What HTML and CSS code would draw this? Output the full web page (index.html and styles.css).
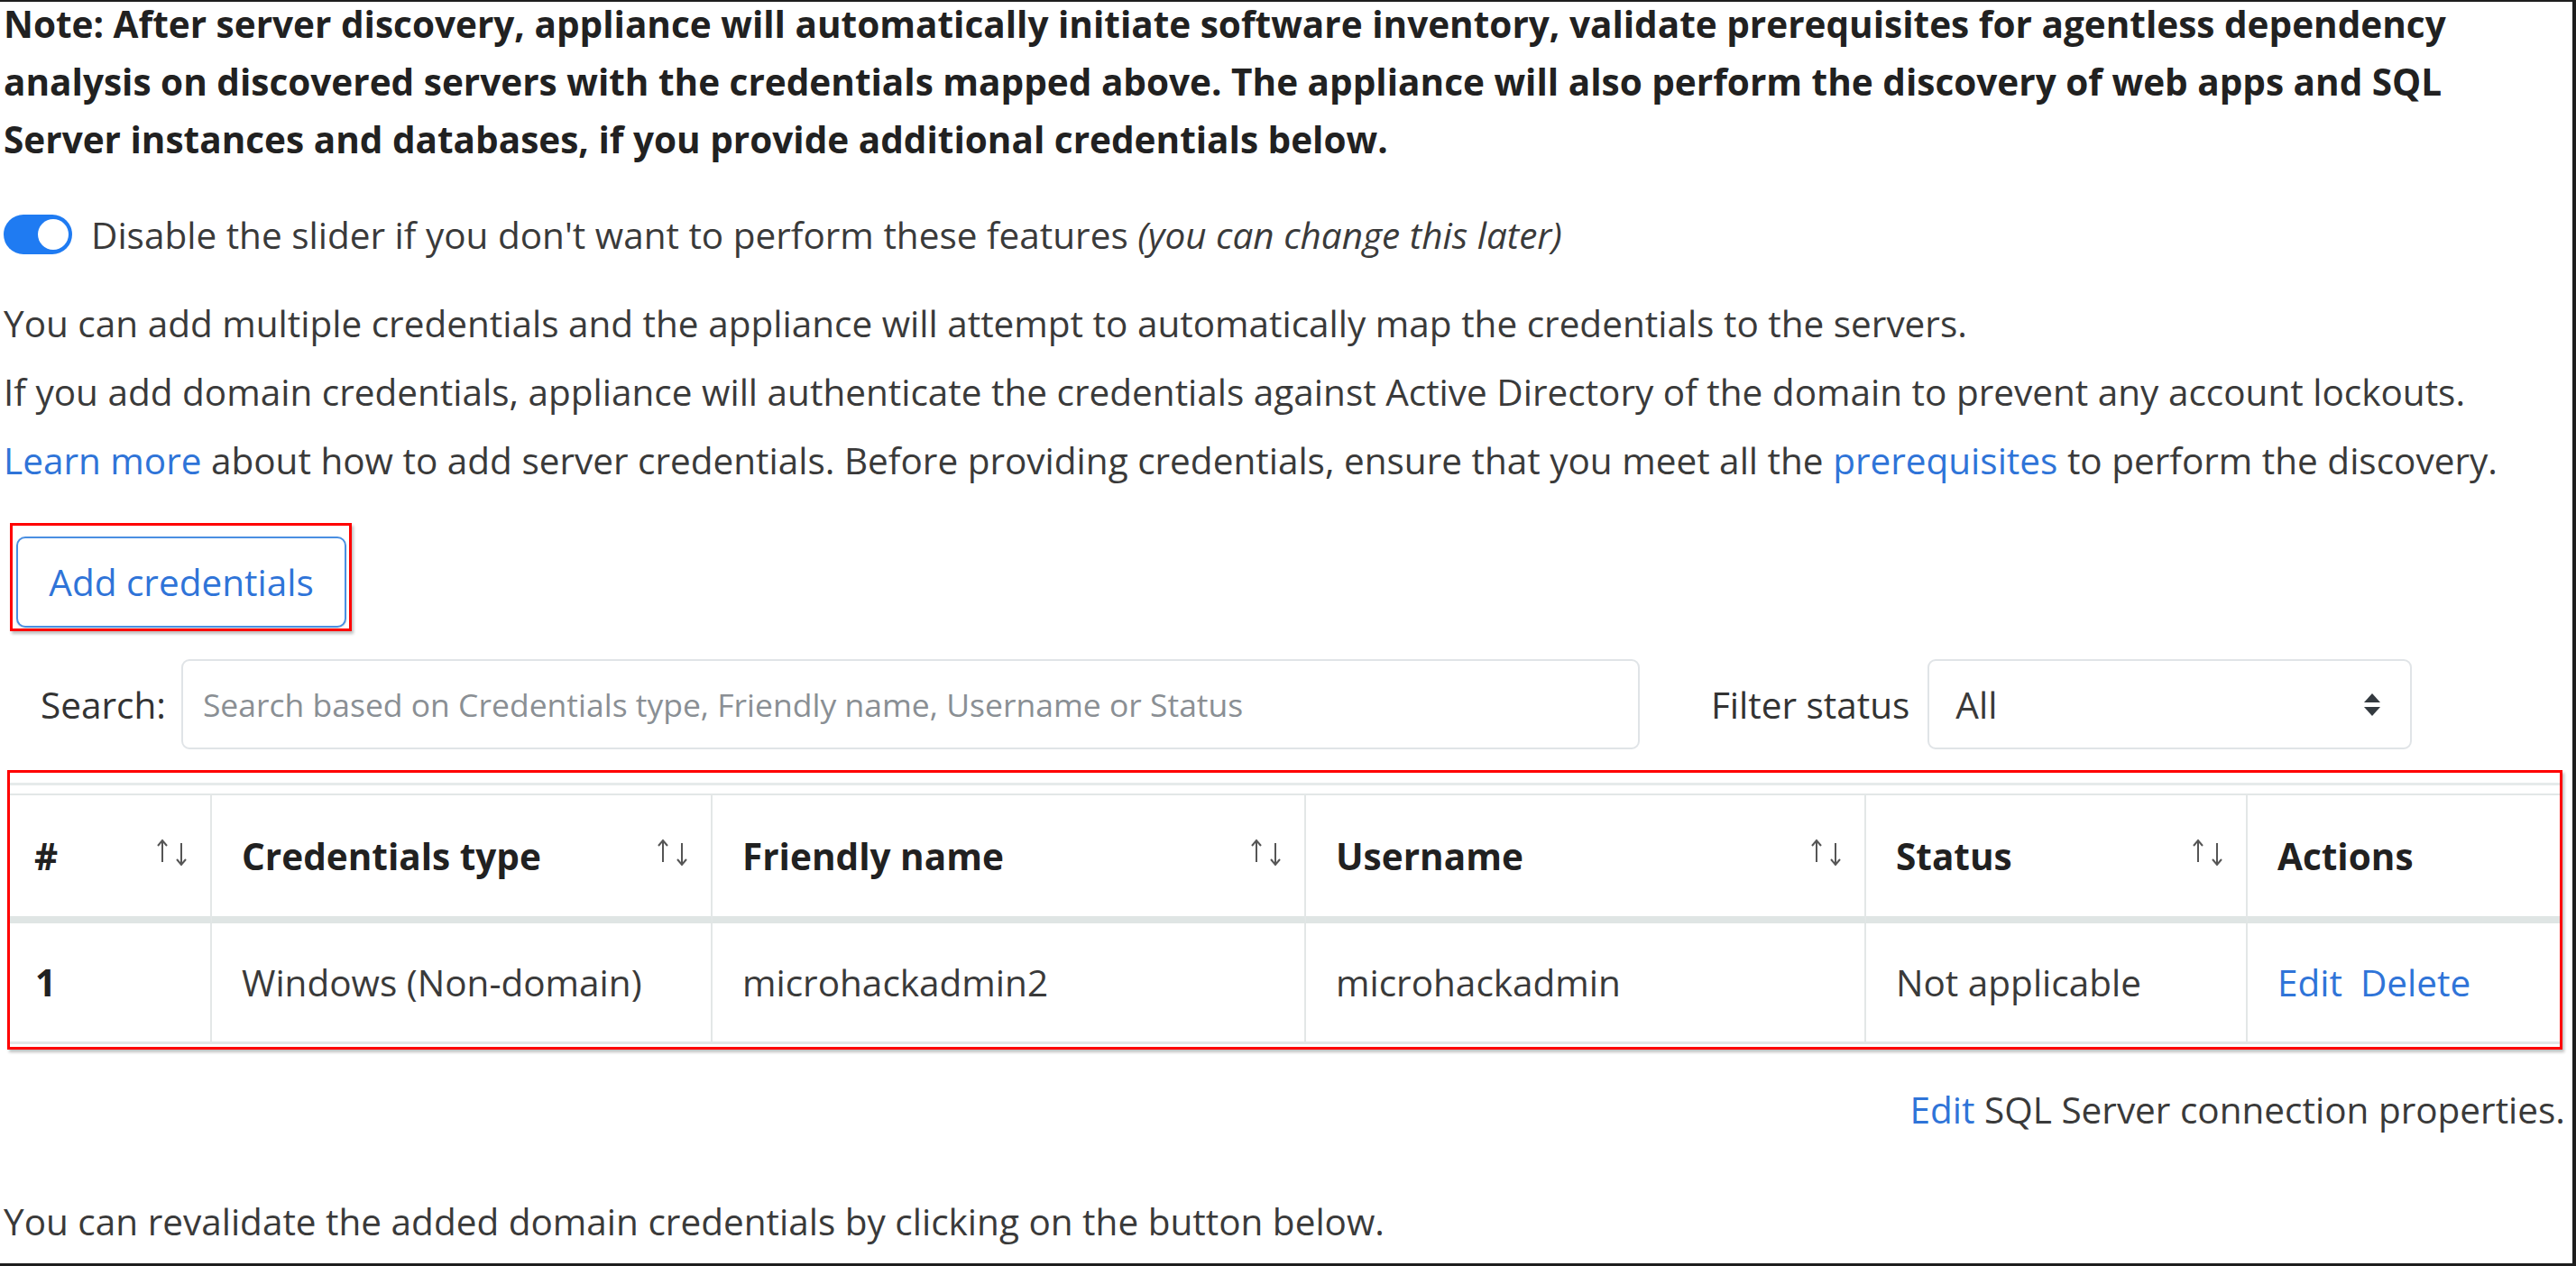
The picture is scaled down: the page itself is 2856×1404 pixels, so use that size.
FILE: index.html
```html
<!DOCTYPE html>
<html lang="en">
<head>
<meta charset="utf-8">
<title>Credentials</title>
<link rel="stylesheet" href="styles.css">
</head>
<body>
<div class="frame">
  <div class="content">
    <p class="note">Note: After server discovery, appliance will automatically initiate software inventory, validate prerequisites for agentless dependency<br>analysis on discovered servers with the credentials mapped above. The appliance will also perform the discovery of web apps and SQL<br>Server instances and databases, if you provide additional credentials below.</p>

    <div class="toggle-row">
      <span class="switch"><span class="knob"></span></span>
      <span class="toggle-label">Disable the slider if you don't want to perform these features <em>(you can change this later)</em></span>
    </div>

    <p class="info first">You can add multiple credentials and the appliance will attempt to automatically map the credentials to the servers.</p>
    <p class="info">If you add domain credentials, appliance will authenticate the credentials against Active Directory of the domain to prevent any account lockouts.</p>
    <p class="info"><a class="link" href="#">Learn more</a> about how to add server credentials. Before providing credentials, ensure that you meet all the <a class="link" href="#">prerequisites</a> to perform the discovery.</p>

    <div class="highlight btn-highlight">
      <button class="btn-outline" type="button">Add credentials</button>
    </div>

    <div class="search-row">
      <label class="search-label" for="q">Search:</label>
      <input id="q" class="search-input" type="text" placeholder="Search based on Credentials type, Friendly name, Username or Status">
      <span class="filter-label">Filter status</span>
      <div class="select">
        <span>All</span>
        <svg class="select-caret" width="24" height="27" viewBox="0 0 24 27"><polygon points="3,11 12,1 21,11" fill="#343a40"/><polygon points="3,16 12,26 21,16" fill="#343a40"/></svg>
      </div>
    </div>

    <div class="highlight table-highlight">
      <div class="scroll-head"></div>
      <table class="creds">
        <colgroup>
          <col class="c1"><col class="c2"><col class="c3"><col class="c4"><col class="c5"><col class="c6">
        </colgroup>
        <thead>
          <tr>
            <th><div class="th-inner"><span>#</span><svg class="sort" width="40" height="32" viewBox="0 0 40 32"><path d="M9 27V3M4 9l5-6 5 6M30 6v24M25 24l5 6 5-6" fill="none" stroke="#555" stroke-width="2"/></svg></div></th>
            <th><div class="th-inner"><span>Credentials type</span><svg class="sort" width="40" height="32" viewBox="0 0 40 32"><path d="M9 27V3M4 9l5-6 5 6M30 6v24M25 24l5 6 5-6" fill="none" stroke="#555" stroke-width="2"/></svg></div></th>
            <th><div class="th-inner"><span>Friendly name</span><svg class="sort" width="40" height="32" viewBox="0 0 40 32"><path d="M9 27V3M4 9l5-6 5 6M30 6v24M25 24l5 6 5-6" fill="none" stroke="#555" stroke-width="2"/></svg></div></th>
            <th><div class="th-inner"><span>Username</span><svg class="sort" width="40" height="32" viewBox="0 0 40 32"><path d="M9 27V3M4 9l5-6 5 6M30 6v24M25 24l5 6 5-6" fill="none" stroke="#555" stroke-width="2"/></svg></div></th>
            <th><div class="th-inner"><span>Status</span><svg class="sort" width="40" height="32" viewBox="0 0 40 32"><path d="M9 27V3M4 9l5-6 5 6M30 6v24M25 24l5 6 5-6" fill="none" stroke="#555" stroke-width="2"/></svg></div></th>
            <th><div class="th-inner"><span>Actions</span></div></th>
          </tr>
        </thead>
        <tbody>
          <tr>
            <td class="num">1</td>
            <td>Windows (Non-domain)</td>
            <td>microhackadmin2</td>
            <td>microhackadmin</td>
            <td>Not applicable</td>
            <td><a class="link" href="#">Edit</a><a class="link action-gap" href="#">Delete</a></td>
          </tr>
        </tbody>
      </table>
    </div>

    <p class="sql"><a class="link" href="#">Edit</a> SQL Server connection properties.</p>

    <p class="info revalidate">You can revalidate the added domain credentials by clicking on the button below.</p>
  </div>
</div>
</body>
</html>
```

FILE: styles.css
```css
html, body {
  margin: 0;
  padding: 0;
  background: #1e1e1e;
}

body {
  width: 2856px;
  height: 1404px;
  overflow: hidden;
  font-family: "Open Sans", "Noto Sans", sans-serif;
  color: #333333;
}

.frame {
  box-sizing: border-box;
  width: 2856px;
  height: 1404px;
  background: #ffffff;
  border-top: 2px solid #1e1e1e;
  border-right: 4px solid #1e1e1e;
  border-bottom: 3px solid #1e1e1e;
  overflow: hidden;
}

.content {
  display: flex;
  flex-direction: column;
  padding-left: 4px;
  font-size: 40.5px;
}

p { margin: 0; }

.note {
  margin-top: -7px;
  font-weight: 700;
  color: #212121;
  line-height: 64px;
  white-space: nowrap;
}

.toggle-row {
  margin-top: 41px;
  height: 64px;
  display: flex;
  align-items: center;
  gap: 21px;
}

.switch {
  position: relative;
  width: 76px;
  height: 44px;
  border-radius: 22px;
  background: #1f7bf2;
  flex: none;
}

.knob {
  position: absolute;
  right: 4px;
  top: 5px;
  width: 34px;
  height: 34px;
  border-radius: 50%;
  background: #ffffff;
}

.toggle-label {
  color: #3a3a3a;
}

.toggle-label em {
  font-style: italic;
}

.info {
  line-height: 64px;
  margin-top: 12px;
  color: #3a3a3a;
  white-space: nowrap;
}

.info.first { margin-top: 35px; }

.link {
  color: #2f74d8;
  text-decoration: none;
}

.highlight {
  border: 3px solid #ff0000;
  box-shadow: 2px 3px 3px rgba(0, 0, 0, 0.25);
}

.btn-highlight {
  align-self: flex-start;
  margin-top: 37px;
  margin-left: 7px;
  padding: 12px 3px 1px 4px;
}

.btn-outline {
  display: block;
  box-sizing: border-box;
  width: 366px;
  height: 101px;
  padding: 0;
  border: 2px solid #4a8fe2;
  border-radius: 10px;
  background: #ffffff;
  color: #2f74d8;
  font-family: inherit;
  font-size: 40.5px;
  box-shadow: 0 1px 2px rgba(0, 0, 0, 0.15);
}

.search-row {
  margin-top: 31px;
  display: flex;
  align-items: center;
  padding-left: 41px;
}

.search-label {
  color: #333333;
  margin-right: 17px;
}

.search-input {
  box-sizing: border-box;
  width: 1617px;
  height: 100px;
  border: 2px solid #e0e4e7;
  border-radius: 9px;
  padding: 0 22px;
  font-family: inherit;
  font-size: 35.5px;
  color: #333333;
  outline: none;
}

.search-input::placeholder {
  color: #8a8f94;
}

.filter-label {
  margin-left: 79px;
  margin-right: 20px;
  color: #333333;
}

.select {
  box-sizing: border-box;
  width: 537px;
  height: 100px;
  border: 2px solid #e0e4e7;
  border-radius: 9px;
  display: flex;
  align-items: center;
  justify-content: space-between;
  padding: 0 30px 0 29px;
  color: #3a3a3a;
}

.table-highlight {
  margin-top: 23px;
  margin-left: 4px;
  width: 2833px;
  box-sizing: border-box;
  padding: 0 0 3px 0;
}

.scroll-head {
  height: 11px;
  border-bottom: 3px solid #e6eaea;
  margin-bottom: 9px;
}

.creds {
  width: 2827px;
  table-layout: fixed;
  border-collapse: separate;
  border-spacing: 0;
  font-size: 40.5px;
}

.c1 { width: 224px; }
.c2 { width: 555px; }
.c3 { width: 658px; }
.c4 { width: 621px; }
.c5 { width: 423px; }
.c6 { width: 346px; }

.creds th {
  box-sizing: border-box;
  height: 144px;
  padding: 0 22px 0 33px;
  border-top: 2px solid #e3e7e7;
  border-right: 2px solid #e3e7e7;
  border-bottom: 8px solid #dfe5e4;
  text-align: left;
  font-weight: 700;
  color: #212121;
  vertical-align: middle;
}

.creds th:first-child { padding-left: 27px; }
.creds th:last-child { border-right: none; }

.th-inner {
  display: flex;
  align-items: center;
  justify-content: space-between;
}

.sort {
  flex: none;
  margin-top: -8px;
}

.creds td {
  box-sizing: border-box;
  height: 134px;
  padding: 0 20px 0 33px;
  border-right: 2px solid #e3e7e7;
  border-bottom: 3px solid #e3e7e7;
  color: #3a3a3a;
  white-space: nowrap;
}

.creds td:last-child { border-right: none; }

.creds td.num {
  padding-left: 28px;
  font-weight: 700;
  color: #212121;
}

.action-gap { margin-left: 20px; }

.sql {
  margin-top: 35px;
  line-height: 64px;
  text-align: right;
  color: #3a3a3a;
  margin-right: 8px;
}

.revalidate {
  margin-top: 60px;
}
```
